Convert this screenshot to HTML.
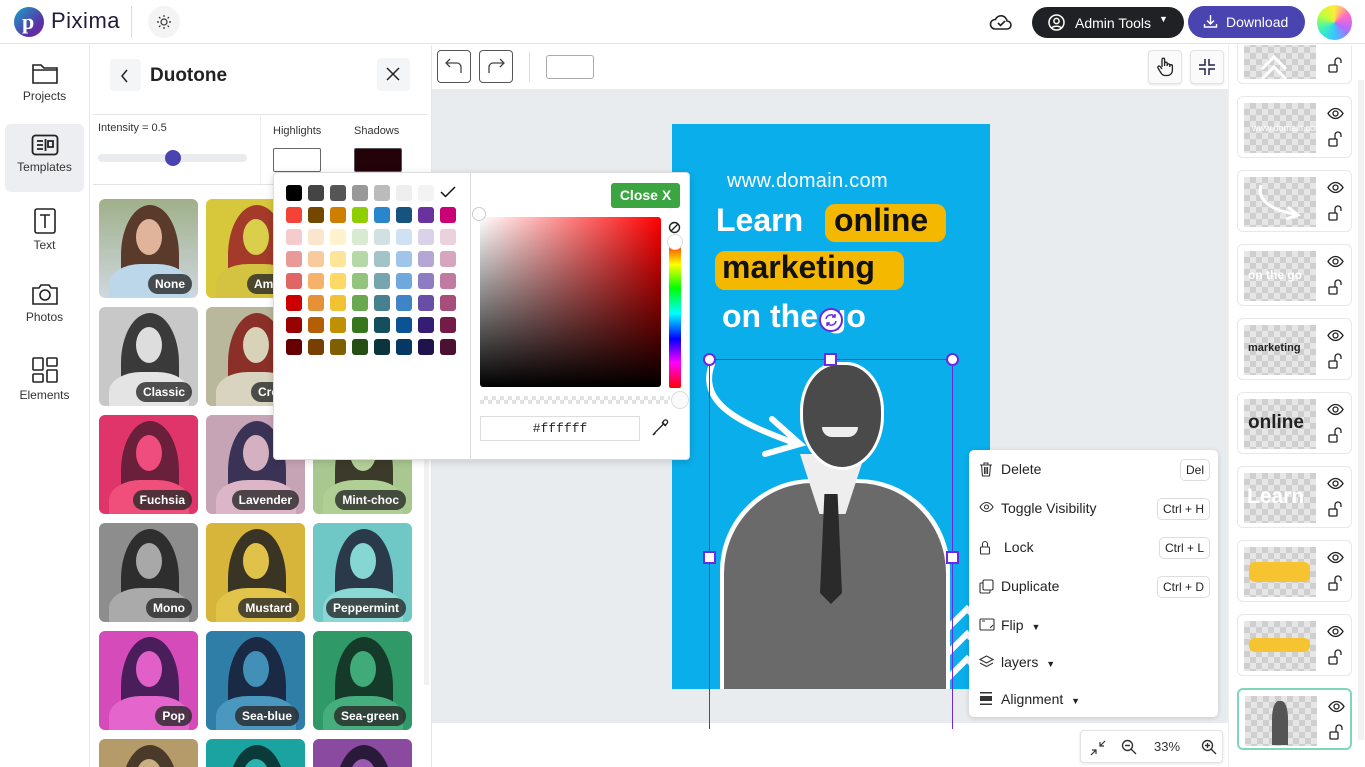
<!DOCTYPE html>
<html><head><meta charset="utf-8">
<style>
*{box-sizing:border-box;margin:0;padding:0}
html,body{width:1365px;height:767px;overflow:hidden}
body{font-family:"Liberation Sans",sans-serif;background:#fff;color:#222}
#root{position:relative;width:1365px;height:767px;overflow:hidden}
.abs{position:absolute}
.top{left:0;top:0;width:1365px;height:44px;border-bottom:1px solid #e3e3e3;background:#fff;z-index:5}
.side{left:0;top:45px;width:90px;height:722px;border-right:1px solid #e6e6e6}
.nav{position:absolute;left:5px;width:79px;height:68px;text-align:center;font-size:12px;color:#333}
.nav svg{display:block;margin:10px auto 4px}
.panel{left:90px;top:45px;width:342px;height:722px;background:#fff;border-right:1px solid #e6e6e6;overflow:hidden}
.th{position:absolute;width:99px;height:99px;border-radius:6px;overflow:hidden}
.th .hair{position:absolute;left:22px;top:6px;width:58px;height:100px;border-radius:50% 50% 20% 20%}
.th .face{position:absolute;left:37px;top:20px;width:26px;height:36px;border-radius:50%}
.th .body{position:absolute;left:10px;top:65px;width:80px;height:50px;border-radius:40% 40% 0 0}
.th .lb{position:absolute;right:6px;bottom:4px;background:rgba(40,40,40,.8);color:#fff;font-weight:bold;font-size:12px;padding:3px 7px;border-radius:10px}
.sw{position:absolute;width:16px;height:16px;border-radius:3px}
.layer{position:absolute;left:8px;width:115px;height:62px;border:1px solid #e8e8e8;border-radius:6px;background:#fff}
.layer .ck{position:absolute;left:6px;top:6px;width:72px;height:50px;background-color:#e6e6e6;background-image:linear-gradient(45deg,#cfcfcf 25%,transparent 25%,transparent 75%,#cfcfcf 75%),linear-gradient(45deg,#cfcfcf 25%,transparent 25%,transparent 75%,#cfcfcf 75%);background-size:12px 12px;background-position:0 0,6px 6px}
.layer .ey{position:absolute;left:89px;top:10px}
.layer .lk{position:absolute;left:90px;top:34px}
.mi{position:absolute;left:0;width:249px;height:39px;font-size:14px;color:#222}
.mi span.t{position:absolute;left:32px;top:11px}
.mi svg{position:absolute;left:10px;top:12px}
.kb{position:absolute;right:8px;top:9px;border:1px solid #ddd;border-radius:5px;font-size:12px;padding:3px 5px;background:#fff}
</style></head><body><div id="root">

<!-- top bar -->
<div class="abs top">
  <div class="abs" style="left:14px;top:7px;width:30px;height:30px;border-radius:50%;background:linear-gradient(135deg,#1aa3c9,#5b2fa6 70%,#7a2b8f)"></div>
  <div class="abs" style="left:22px;top:9px;color:#fff;font-weight:bold;font-size:22px;font-family:'Liberation Serif',serif">p</div>
  <div class="abs" style="left:51px;top:8px;font-size:22px;color:#231a3a;letter-spacing:.5px">Pixima</div>
  <div class="abs" style="left:131px;top:6px;width:1px;height:32px;background:#ddd"></div>
  <div class="abs" style="left:148px;top:6px;width:32px;height:32px;border-radius:50%;background:#f4f4f5"></div>
  <svg class="abs" style="left:156px;top:14px" width="16" height="16" viewBox="0 0 16 16" fill="none" stroke="#333" stroke-width="1.2"><circle cx="8" cy="8" r="3"/><path d="M8 1v2M8 13v2M1 8h2M13 8h2M3 3l1.4 1.4M11.6 11.6 13 13M3 13l1.4-1.4M11.6 4.4 13 3"/></svg>
  <svg class="abs" style="left:989px;top:12px" width="24" height="20" viewBox="0 0 24 20" fill="none" stroke="#222" stroke-width="1.6"><path d="M6 17h12a4 4 0 0 0 0-8 6 6 0 0 0-11.5-1.5A4.5 4.5 0 0 0 6 17z"/><path d="M9 11l2.5 2.5L16 9"/></svg>
  <div class="abs" style="left:1032px;top:7px;width:152px;height:31px;border-radius:16px;background:#202124;color:#fff;font-size:14px">
    <svg class="abs" style="left:16px;top:7px" width="17" height="17" viewBox="0 0 17 17" fill="none" stroke="#fff" stroke-width="1.5"><circle cx="8.5" cy="8.5" r="7.5"/><circle cx="8.5" cy="7" r="2.6"/><path d="M3.8 14c1.5-2.3 7.9-2.3 9.4 0"/></svg>
    <span class="abs" style="left:43px;top:8px">Admin Tools</span>
    <span class="abs" style="left:127px;top:7px;font-size:9px">▼</span>
  </div>
  <div class="abs" style="left:1188px;top:6px;width:117px;height:32px;border-radius:16px;background:#4a44b0;color:#fff;font-size:14px">
    <svg class="abs" style="left:15px;top:8px" width="15" height="15" viewBox="0 0 15 15" fill="none" stroke="#fff" stroke-width="1.4"><path d="M7.5 1v9M4 6.5l3.5 3.5L11 6.5M1.5 10v3h12v-3"/></svg>
    <span class="abs" style="left:38px;top:8px">Download</span>
  </div>
  <div class="abs" style="left:1317px;top:5px;width:35px;height:35px;border-radius:50%;background:conic-gradient(#ffeb3b,#ff69c8,#b06bff,#38c6ff,#38f0c0,#bfff3a,#ffeb3b)"></div>
</div>

<!-- sidebar -->
<div class="abs side">
  <div class="nav" style="top:6px">
    <svg width="28" height="24" viewBox="0 0 28 24" fill="none" stroke="#222" stroke-width="1.6"><path d="M2 4h8l3 3h13v15H2z"/><path d="M2 9h24"/></svg>Projects</div>
  <div class="nav" style="top:79px;background:#eceef1;border-radius:6px">
    <svg width="28" height="22" viewBox="0 0 28 22" fill="none" stroke="#222" stroke-width="1.8"><rect x="1.5" y="1.5" width="25" height="19" rx="3"/><path d="M6 7h6M6 11h6M6 15h6M14.5 5v12M17 7h5v6h-5z"/></svg>Templates</div>
  <div class="nav" style="top:153px">
    <svg width="22" height="26" viewBox="0 0 22 26" fill="none" stroke="#222" stroke-width="1.6"><rect x="1" y="1" width="20" height="24" rx="2"/><path d="M6 7h10M11 7v13"/></svg>Text</div>
  <div class="nav" style="top:227px">
    <svg width="28" height="24" viewBox="0 0 28 24" fill="none" stroke="#222" stroke-width="1.6"><path d="M2 6h6l2-3h8l2 3h6v16H2z"/><circle cx="14" cy="13" r="5"/></svg>Photos</div>
  <div class="nav" style="top:301px">
    <svg width="28" height="28" viewBox="0 0 28 28" fill="none" stroke="#222" stroke-width="1.6"><rect x="2" y="2" width="10" height="12" rx="1"/><rect x="16" y="2" width="10" height="8" rx="1"/><rect x="2" y="18" width="10" height="8" rx="1"/><rect x="16" y="14" width="10" height="12" rx="1"/></svg>Elements</div>
</div>

<!-- panel -->
<div class="abs panel">
  <div class="abs" style="left:20px;top:14px;width:31px;height:32px;background:#f4f5f6;border-radius:4px"></div>
  <svg class="abs" style="left:30px;top:24px" width="10" height="14" viewBox="0 0 10 14" fill="none" stroke="#222" stroke-width="1.5"><path d="M7 1 2 7l5 6"/></svg>
  <div class="abs" style="left:60px;top:20px;font-size:19px;font-weight:bold;color:#222">Duotone</div>
  <div class="abs" style="left:287px;top:13px;width:33px;height:33px;background:#f4f5f6;border-radius:4px"></div>
  <svg class="abs" style="left:296px;top:22px" width="14" height="14" viewBox="0 0 14 14" stroke="#222" stroke-width="1.5"><path d="M1 1l12 12M13 1 1 13"/></svg>
  <div class="abs" style="left:3px;top:69px;width:334px;height:1px;background:#e3e3e3"></div>
  <div class="abs" style="left:8px;top:77px;font-size:11px;color:#333">Intensity = 0.5</div>
  <div class="abs" style="left:8px;top:109px;width:149px;height:8px;border-radius:4px;background:#e9ebee"></div>
  <div class="abs" style="left:75px;top:105px;width:16px;height:16px;border-radius:50%;background:#4a44b0"></div>
  <div class="abs" style="left:170px;top:71px;width:1px;height:70px;background:#eee"></div>
  <div class="abs" style="left:183px;top:80px;font-size:11px;color:#333">Highlights</div>
  <div class="abs" style="left:264px;top:80px;font-size:11px;color:#333">Shadows</div>
  <div class="abs" style="left:183px;top:103px;width:48px;height:24px;border:1px solid #666;border-radius:2px;background:#fff"></div>
  <div class="abs" style="left:264px;top:103px;width:48px;height:24px;border:1px solid #555;border-radius:2px;background:#230309"></div>
  <div class="abs" style="left:3px;top:139px;width:334px;height:1px;background:#e3e3e3"></div>
  <div class="abs" style="left:334px;top:150px;width:5px;height:490px;background:#f1f1f1"></div>

  <!-- thumbnails (relative to panel: x-90, y-45) -->
  <div class="th" style="left:9px;top:154px;background:linear-gradient(#9fb08a,#cfd8e0)"><div class="hair" style="background:#5a3a2a"></div><div class="face" style="background:#e0b49a"></div><div class="body" style="background:#bcd6ea"></div><span class="lb">None</span></div>
  <div class="th" style="left:116px;top:154px;background:#d6c83a"><div class="hair" style="background:#a33a2a"></div><div class="face" style="background:#d9cf4a"></div><div class="body" style="background:#d4c340"></div><span class="lb">Amber</span></div>
  <div class="th" style="left:223px;top:154px;background:#ccc"></div>
  <div class="th" style="left:9px;top:262px;background:#c8c8c8"><div class="hair" style="background:#3a3a3a"></div><div class="face" style="background:#ddd"></div><div class="body" style="background:#e4e4e4"></div><span class="lb">Classic</span></div>
  <div class="th" style="left:116px;top:262px;background:#b9b79c"><div class="hair" style="background:#8a3028"></div><div class="face" style="background:#d8d2b8"></div><div class="body" style="background:#d8d4c0"></div><span class="lb">Cross</span></div>
  <div class="th" style="left:223px;top:262px;background:#ccc"></div>
  <div class="th" style="left:9px;top:370px;background:#e0356a"><div class="hair" style="background:#6a1f3a"></div><div class="face" style="background:#ef4d7d"></div><div class="body" style="background:#f04f7c"></div><span class="lb">Fuchsia</span></div>
  <div class="th" style="left:116px;top:370px;background:#c7a3b6"><div class="hair" style="background:#3b3356"></div><div class="face" style="background:#d4b0c0"></div><div class="body" style="background:#dcb6c6"></div><span class="lb">Lavender</span></div>
  <div class="th" style="left:223px;top:370px;background:#a8c890"><div class="hair" style="background:#3c3a2a"></div><div class="face" style="background:#b5d29a"></div><div class="body" style="background:#b0cf95"></div><span class="lb">Mint-choc</span></div>
  <div class="th" style="left:9px;top:478px;background:#8d8d8d"><div class="hair" style="background:#2e2e2e"></div><div class="face" style="background:#a8a8a8"></div><div class="body" style="background:#aaa"></div><span class="lb">Mono</span></div>
  <div class="th" style="left:116px;top:478px;background:#d7b43a"><div class="hair" style="background:#3a3424"></div><div class="face" style="background:#e0c24a"></div><div class="body" style="background:#e2c44a"></div><span class="lb">Mustard</span></div>
  <div class="th" style="left:223px;top:478px;background:#6fc7c6"><div class="hair" style="background:#2a3a4a"></div><div class="face" style="background:#86d6d4"></div><div class="body" style="background:#8ad8d6"></div><span class="lb">Peppermint</span></div>
  <div class="th" style="left:9px;top:586px;background:#d44bb9"><div class="hair" style="background:#4a1e5a"></div><div class="face" style="background:#e060c8"></div><div class="body" style="background:#e466cc"></div><span class="lb">Pop</span></div>
  <div class="th" style="left:116px;top:586px;background:#2f7ea8"><div class="hair" style="background:#1a2a44"></div><div class="face" style="background:#4290b8"></div><div class="body" style="background:#4a98c0"></div><span class="lb">Sea-blue</span></div>
  <div class="th" style="left:223px;top:586px;background:#2f9a68"><div class="hair" style="background:#153a2a"></div><div class="face" style="background:#40aa78"></div><div class="body" style="background:#45ae7c"></div><span class="lb">Sea-green</span></div>
  <div class="th" style="left:9px;top:694px;background:#b59a6a"><div class="hair" style="background:#4a3a2a"></div><div class="face" style="background:#c8ae80"></div></div>
  <div class="th" style="left:116px;top:694px;background:#1aa3a0"><div class="hair" style="background:#0a3a3a"></div><div class="face" style="background:#2ab4b0"></div></div>
  <div class="th" style="left:223px;top:694px;background:#8a4aa0"><div class="hair" style="background:#2a1a3a"></div><div class="face" style="background:#9a5ab0"></div></div>
</div>

<!-- canvas area -->
<div class="abs" style="left:432px;top:45px;width:796px;height:44px;background:#fff"></div>
<div class="abs" style="left:437px;top:50px;width:34px;height:33px;border:1px solid #555;border-radius:4px"></div>
<svg class="abs" style="left:445px;top:58px" width="18" height="16" viewBox="0 0 18 16" fill="none" stroke="#444" stroke-width="1.3"><path d="M5 1 1 5l4 4M1 5h11a4 4 0 0 1 4 4v6"/></svg>
<div class="abs" style="left:479px;top:50px;width:34px;height:33px;border:1px solid #555;border-radius:4px"></div>
<svg class="abs" style="left:487px;top:58px" width="18" height="16" viewBox="0 0 18 16" fill="none" stroke="#444" stroke-width="1.3"><path d="M13 1l4 4-4 4M17 5H6a4 4 0 0 0-4 4v6"/></svg>
<div class="abs" style="left:529px;top:52px;width:1px;height:30px;background:#ddd"></div>
<div class="abs" style="left:546px;top:55px;width:48px;height:24px;border:1px solid #aaa;border-radius:3px"></div>
<div class="abs" style="left:1148px;top:50px;width:34px;height:34px;border:1px solid #e3e3e3;border-radius:4px;background:#fafafa;box-shadow:0 1px 2px rgba(0,0,0,.1)"></div>
<svg class="abs" style="left:1156px;top:57px" width="18" height="20" viewBox="0 0 18 20" fill="none" stroke="#222" stroke-width="1.3"><path d="M6 10V2.5a1.3 1.3 0 0 1 2.6 0V9M8.6 8V6.5a1.3 1.3 0 0 1 2.6 0V9M11.2 8.2a1.3 1.3 0 0 1 2.6 0V10M13.8 9a1.3 1.3 0 0 1 2.6 0V13c0 3-2 5.5-5 5.5H9c-2 0-3-1-4-2.5L2 11a1.3 1.3 0 0 1 2-1.6L6 12"/></svg>
<div class="abs" style="left:1190px;top:50px;width:34px;height:34px;border:1px solid #e3e3e3;border-radius:4px;background:#fafafa;box-shadow:0 1px 2px rgba(0,0,0,.1)"></div>
<svg class="abs" style="left:1198px;top:58px" width="18" height="18" viewBox="0 0 18 18" fill="none" stroke="#224" stroke-width="1.5"><path d="M7 1v6H1M11 1v6h6M7 17v-6H1M11 17v-6h6"/></svg>
<div class="abs" style="left:432px;top:89px;width:796px;height:634px;background:#e9ecef"></div>
<div class="abs" style="left:432px;top:723px;width:796px;height:44px;background:#fff"></div>

<!-- artboard -->
<div class="abs" style="left:672px;top:124px;width:318px;height:565px;background:#0aaeeb;overflow:hidden">
  <div class="abs" style="left:55px;top:46px;color:#fff;font-size:20px;letter-spacing:.3px">www.domain.com</div>
  <div class="abs" style="left:44px;top:78px;color:#fff;font-size:32px;font-weight:bold">Learn</div>
  <div class="abs" style="left:153px;top:80px;width:121px;height:38px;border-radius:10px;background:#f5b800"></div>
  <div class="abs" style="left:162px;top:78px;color:#111;font-size:32px;font-weight:bold">online</div>
  <div class="abs" style="left:43px;top:127px;width:189px;height:39px;border-radius:10px;background:#f5b800"></div>
  <div class="abs" style="left:50px;top:125px;color:#111;font-size:32px;font-weight:bold">marketing</div>
  <div class="abs" style="left:50px;top:174px;color:#fff;font-size:32px;font-weight:bold">on the go</div>
  <svg class="abs" style="left:30px;top:235px" width="110" height="105" viewBox="0 0 110 105" fill="none" stroke="#fff" stroke-width="6" stroke-linecap="round"><path d="M10 5C-5 45 40 65 95 85M70 60l28 25-35 10"/></svg>
  <svg class="abs" style="left:260px;top:480px" width="60" height="90" viewBox="0 0 60 90" fill="none" stroke="#fff" stroke-width="6"><path d="M5 35 35 5 60 30M5 60l30-30 25 25M5 85l30-30 25 25"/></svg>
  <!-- man -->
  <div class="abs" style="left:48px;top:355px;width:230px;height:230px;border-radius:40% 40% 0 0;background:#fff"></div>
  <div class="abs" style="left:52px;top:359px;width:222px;height:226px;border-radius:40% 40% 0 0;background:#6a6a6a"></div>
  <div class="abs" style="left:128px;top:330px;width:65px;height:60px;background:#eee;clip-path:polygon(0 0,100% 0,70% 100%,30% 100%)"></div>
  <div class="abs" style="left:148px;top:370px;width:22px;height:110px;background:#2a2a2a;clip-path:polygon(20% 0,80% 0,100% 90%,50% 100%,0 90%)"></div>
  <div class="abs" style="left:128px;top:238px;width:84px;height:108px;border-radius:45% 45% 50% 50%;background:#fff"></div>
  <div class="abs" style="left:131px;top:241px;width:78px;height:102px;border-radius:45% 45% 50% 50%;background:#4a4a4a"></div>
  <div class="abs" style="left:150px;top:303px;width:36px;height:10px;border-radius:0 0 18px 18px;background:#eee"></div>
</div>
<!-- selection -->
<div class="abs" style="left:709px;top:359px;width:244px;height:370px;border:1.5px solid #6b2ae0;border-bottom:none"></div>
<div class="abs" style="left:703px;top:353px;width:13px;height:13px;border:2px solid #6b2ae0;border-radius:50%;background:#fff"></div>
<div class="abs" style="left:946px;top:353px;width:13px;height:13px;border:2px solid #6b2ae0;border-radius:50%;background:#fff"></div>
<div class="abs" style="left:824px;top:353px;width:13px;height:13px;border:2px solid #6b2ae0;background:#fff"></div>
<div class="abs" style="left:703px;top:551px;width:13px;height:13px;border:2px solid #6b2ae0;background:#fff"></div>
<div class="abs" style="left:946px;top:551px;width:13px;height:13px;border:2px solid #6b2ae0;background:#fff"></div>
<div class="abs" style="left:819px;top:308px;width:24px;height:24px;border:2px solid #6b2ae0;border-radius:50%;background:#fff"></div>
<svg class="abs" style="left:823px;top:312px" width="16" height="16" viewBox="0 0 16 16" fill="none" stroke="#6b2ae0" stroke-width="1.5"><path d="M3 7a5 5 0 0 1 9-2M13 9a5 5 0 0 1-9 2M12 2v3H9M4 14v-3h3"/></svg>

<!-- color picker -->
<div class="abs" style="left:273px;top:172px;width:417px;height:288px;background:#fff;border:1px solid #ddd;border-radius:4px;box-shadow:0 2px 8px rgba(0,0,0,.15)">
  <div class="abs" style="left:196px;top:0;width:1px;height:288px;background:#ddd"></div>
  <svg class="abs" style="left:166px;top:12px" width="16" height="14" viewBox="0 0 16 14" fill="none" stroke="#111" stroke-width="1.5"><path d="M1 7l4.5 4.5L15 2"/></svg>
  <div class="abs" style="left:337px;top:10px;width:69px;height:25px;background:#3aa541;border-radius:3px;color:#fff;font-weight:bold;font-size:14px;text-align:center;line-height:25px">Close X</div>
  <div class="abs" style="left:206px;top:44px;width:181px;height:170px;border-radius:3px;background:linear-gradient(to top,#000,transparent),linear-gradient(to right,#fff,#f00)"></div>
  <div class="abs" style="left:198px;top:34px;width:14px;height:14px;border-radius:50%;border:1px solid #ccc;background:#fff"></div>
  <div class="abs" style="left:395px;top:66px;width:12px;height:149px;border-radius:2px;background:linear-gradient(#f00,#ff0 17%,#0f0 33%,#0ff 50%,#00f 67%,#f0f 83%,#f00)"></div>
  <div class="abs" style="left:393px;top:61px;width:16px;height:16px;border-radius:50%;border:1px solid #ddd;background:#fff"></div>
  <svg class="abs" style="left:394px;top:48px" width="13" height="13" viewBox="0 0 13 13" fill="none" stroke="#222" stroke-width="1.4"><circle cx="6.5" cy="6.5" r="5"/><path d="M3 10l7-7"/></svg>
  <div class="abs" style="left:206px;top:223px;width:190px;height:8px;background-image:linear-gradient(45deg,#ddd 25%,transparent 25%,transparent 75%,#ddd 75%),linear-gradient(45deg,#ddd 25%,transparent 25%,transparent 75%,#ddd 75%);background-size:8px 8px;background-position:0 0,4px 4px;opacity:.8"></div>
  <div class="abs" style="left:397px;top:218px;width:18px;height:18px;border-radius:50%;border:1px solid #ddd;background:#fafafa"></div>
  <div class="abs" style="left:206px;top:243px;width:160px;height:25px;border:1px solid #ddd;font-family:'Liberation Mono',monospace;font-size:13px;text-align:center;line-height:24px">#ffffff</div>
  <svg class="abs" style="left:377px;top:246px" width="18" height="18" viewBox="0 0 18 18" fill="none" stroke="#222" stroke-width="1.3"><path d="M11 3l4 4M13 1.5a2 2 0 0 1 3 3L14 6.5 11.5 4zM12 5.5 4 13.5 2 16l2.5-2"/></svg>
</div>

<!-- context menu -->
<div class="abs" style="left:969px;top:450px;width:249px;height:267px;background:#fff;border-radius:5px;box-shadow:0 1px 6px rgba(0,0,0,.15)">
  <div class="mi" style="top:0"><svg width="14" height="15" viewBox="0 0 14 15" fill="none" stroke="#333" stroke-width="1.1"><path d="M1 3h12M5 3V1h4v2M2.5 3l1 11h7l1-11M5.5 5v7M7 5v7M8.5 5v7"/></svg><span class="t">Delete</span><span class="kb">Del</span></div>
  <div class="mi" style="top:39px"><svg width="15" height="12" viewBox="0 0 15 12" fill="none" stroke="#333" stroke-width="1.1"><path d="M1 6s2.5-4.5 6.5-4.5S14 6 14 6s-2.5 4.5-6.5 4.5S1 6 1 6z"/><circle cx="7.5" cy="6" r="2"/></svg><span class="t">Toggle Visibility</span><span class="kb">Ctrl + H</span></div>
  <div class="mi" style="top:78px"><svg width="12" height="15" viewBox="0 0 12 15" fill="none" stroke="#333" stroke-width="1.1"><rect x="1.5" y="7" width="9" height="7" rx="1"/><path d="M3.5 7V4a2.5 2.5 0 0 1 5 0v3"/></svg><span class="t" style="left:35px">Lock</span><span class="kb">Ctrl + L</span></div>
  <div class="mi" style="top:117px"><svg width="15" height="15" viewBox="0 0 15 15" fill="none" stroke="#333" stroke-width="1.1"><rect x="4" y="1" width="10" height="10" rx="1.5"/><path d="M4 4H2a1 1 0 0 0-1 1v8a1 1 0 0 0 1 1h8a1 1 0 0 0 1-1v-2"/></svg><span class="t">Duplicate</span><span class="kb">Ctrl + D</span></div>
  <div class="mi" style="top:156px"><svg width="16" height="13" viewBox="0 0 16 13" fill="none" stroke="#333" stroke-width="1.1"><rect x="1" y="1" width="14" height="11" rx="1"/><path d="M11 10l3-3M3 3h3"/></svg><span class="t">Flip <span style="font-size:9px;margin-left:4px">▼</span></span></div>
  <div class="mi" style="top:193px"><svg width="15" height="13" viewBox="0 0 15 13" fill="none" stroke="#333" stroke-width="1.1"><path d="M7.5 1 14 4.5 7.5 8 1 4.5zM1 8l6.5 3.5L14 8"/></svg><span class="t">layers <span style="font-size:9px;margin-left:4px">▼</span></span></div>
  <div class="mi" style="top:230px"><svg width="14" height="13" viewBox="0 0 14 13"><rect x="1" y="0" width="12" height="1.5" fill="#333"/><rect x="1" y="4" width="12" height="5" fill="#333"/><rect x="1" y="11.5" width="12" height="1.5" fill="#333"/></svg><span class="t">Alignment <span style="font-size:9px;margin-left:4px">▼</span></span></div>
</div>

<!-- zoom control -->
<div class="abs" style="left:1080px;top:730px;width:143px;height:33px;background:#fff;border:1px solid #e3e3e3;border-radius:4px;box-shadow:0 1px 3px rgba(0,0,0,.1);font-size:13px;color:#333">
  <svg class="abs" style="left:9px;top:9px" width="16" height="16" viewBox="0 0 16 16" fill="none" stroke="#333" stroke-width="1.2"><path d="M1 15l5-5M2 10h4v4M15 1l-5 5M10 2v4h4"/></svg>
  <svg class="abs" style="left:40px;top:8px" width="16" height="16" viewBox="0 0 16 16" fill="none" stroke="#333" stroke-width="1.4"><circle cx="6.5" cy="6.5" r="5"/><path d="M10 10l5 5M4 6.5h5"/></svg>
  <span class="abs" style="left:73px;top:8px">33%</span>
  <svg class="abs" style="left:120px;top:8px" width="16" height="16" viewBox="0 0 16 16" fill="none" stroke="#333" stroke-width="1.4"><circle cx="6.5" cy="6.5" r="5"/><path d="M10 10l5 5M4 6.5h5M6.5 4v5"/></svg>
</div>

<!-- layers panel -->
<div class="abs" style="left:1228px;top:45px;width:137px;height:722px;background:#fff;border-left:1px solid #eee;overflow:hidden">
<div class="abs" style="left:129px;top:35px;width:6px;height:660px;background:#f1f1f1"></div>
<div class="layer" style="top:-23px"><div class="ck"></div><svg class="abs" style="left:16px;top:18px" width="40" height="40" viewBox="0 0 40 40" fill="none" stroke="#fff" stroke-width="3"><path d="M8 28 20 16l12 12M8 38l12-12 12 12"/></svg><svg class="lk" width="14" height="16" viewBox="0 0 14 16" fill="none" stroke="#222" stroke-width="1.3"><rect x="1" y="8" width="8" height="7" rx="1"/><path d="M7 8V4a3 3 0 0 1 6 0v2"/></svg></div>
<div class="layer" style="top:51px"><div class="ck"></div><span class="abs" style="left:14px;top:26px;font-size:9px;color:#fff">www.domain.com</span><svg class="ey" width="17" height="13" viewBox="0 0 17 13" fill="none" stroke="#222" stroke-width="1.3"><path d="M1 6.5S4 1.5 8.5 1.5 16 6.5 16 6.5s-3 5-7.5 5S1 6.5 1 6.5z"/><circle cx="8.5" cy="6.5" r="2.5"/></svg><svg class="lk" width="14" height="16" viewBox="0 0 14 16" fill="none" stroke="#222" stroke-width="1.3"><rect x="1" y="8" width="8" height="7" rx="1"/><path d="M7 8V4a3 3 0 0 1 6 0v2"/></svg></div>
<div class="layer" style="top:125px"><div class="ck"></div><svg class="abs" style="left:18px;top:12px" width="50" height="40" viewBox="0 0 50 40" fill="none" stroke="#fff" stroke-width="3"><path d="M5 2C0 20 20 28 42 32M32 24l10 8-12 4"/></svg><svg class="ey" width="17" height="13" viewBox="0 0 17 13" fill="none" stroke="#222" stroke-width="1.3"><path d="M1 6.5S4 1.5 8.5 1.5 16 6.5 16 6.5s-3 5-7.5 5S1 6.5 1 6.5z"/><circle cx="8.5" cy="6.5" r="2.5"/></svg><svg class="lk" width="14" height="16" viewBox="0 0 14 16" fill="none" stroke="#222" stroke-width="1.3"><rect x="1" y="8" width="8" height="7" rx="1"/><path d="M7 8V4a3 3 0 0 1 6 0v2"/></svg></div>
<div class="layer" style="top:199px"><div class="ck"></div><span class="abs" style="left:10px;top:23px;font-size:12px;font-weight:bold;color:#fff">on the go</span><svg class="ey" width="17" height="13" viewBox="0 0 17 13" fill="none" stroke="#222" stroke-width="1.3"><path d="M1 6.5S4 1.5 8.5 1.5 16 6.5 16 6.5s-3 5-7.5 5S1 6.5 1 6.5z"/><circle cx="8.5" cy="6.5" r="2.5"/></svg><svg class="lk" width="14" height="16" viewBox="0 0 14 16" fill="none" stroke="#222" stroke-width="1.3"><rect x="1" y="8" width="8" height="7" rx="1"/><path d="M7 8V4a3 3 0 0 1 6 0v2"/></svg></div>
<div class="layer" style="top:273px"><div class="ck"></div><span class="abs" style="left:10px;top:23px;font-size:11px;font-weight:bold;color:#222">marketing</span><svg class="ey" width="17" height="13" viewBox="0 0 17 13" fill="none" stroke="#222" stroke-width="1.3"><path d="M1 6.5S4 1.5 8.5 1.5 16 6.5 16 6.5s-3 5-7.5 5S1 6.5 1 6.5z"/><circle cx="8.5" cy="6.5" r="2.5"/></svg><svg class="lk" width="14" height="16" viewBox="0 0 14 16" fill="none" stroke="#222" stroke-width="1.3"><rect x="1" y="8" width="8" height="7" rx="1"/><path d="M7 8V4a3 3 0 0 1 6 0v2"/></svg></div>
<div class="layer" style="top:347px"><div class="ck"></div><span class="abs" style="left:10px;top:19px;font-size:19px;font-weight:bold;color:#222">online</span><svg class="ey" width="17" height="13" viewBox="0 0 17 13" fill="none" stroke="#222" stroke-width="1.3"><path d="M1 6.5S4 1.5 8.5 1.5 16 6.5 16 6.5s-3 5-7.5 5S1 6.5 1 6.5z"/><circle cx="8.5" cy="6.5" r="2.5"/></svg><svg class="lk" width="14" height="16" viewBox="0 0 14 16" fill="none" stroke="#222" stroke-width="1.3"><rect x="1" y="8" width="8" height="7" rx="1"/><path d="M7 8V4a3 3 0 0 1 6 0v2"/></svg></div>
<div class="layer" style="top:421px"><div class="ck"></div><span class="abs" style="left:9px;top:18px;font-size:21px;font-weight:bold;color:#fff">Learn</span><svg class="ey" width="17" height="13" viewBox="0 0 17 13" fill="none" stroke="#222" stroke-width="1.3"><path d="M1 6.5S4 1.5 8.5 1.5 16 6.5 16 6.5s-3 5-7.5 5S1 6.5 1 6.5z"/><circle cx="8.5" cy="6.5" r="2.5"/></svg><svg class="lk" width="14" height="16" viewBox="0 0 14 16" fill="none" stroke="#222" stroke-width="1.3"><rect x="1" y="8" width="8" height="7" rx="1"/><path d="M7 8V4a3 3 0 0 1 6 0v2"/></svg></div>
<div class="layer" style="top:495px"><div class="ck"></div><div class="abs" style="left:11px;top:21px;width:61px;height:20px;border-radius:6px;background:#f7c431"></div><svg class="ey" width="17" height="13" viewBox="0 0 17 13" fill="none" stroke="#222" stroke-width="1.3"><path d="M1 6.5S4 1.5 8.5 1.5 16 6.5 16 6.5s-3 5-7.5 5S1 6.5 1 6.5z"/><circle cx="8.5" cy="6.5" r="2.5"/></svg><svg class="lk" width="14" height="16" viewBox="0 0 14 16" fill="none" stroke="#222" stroke-width="1.3"><rect x="1" y="8" width="8" height="7" rx="1"/><path d="M7 8V4a3 3 0 0 1 6 0v2"/></svg></div>
<div class="layer" style="top:569px"><div class="ck"></div><div class="abs" style="left:11px;top:23px;width:61px;height:14px;border-radius:6px;background:#f7c431"></div><svg class="ey" width="17" height="13" viewBox="0 0 17 13" fill="none" stroke="#222" stroke-width="1.3"><path d="M1 6.5S4 1.5 8.5 1.5 16 6.5 16 6.5s-3 5-7.5 5S1 6.5 1 6.5z"/><circle cx="8.5" cy="6.5" r="2.5"/></svg><svg class="lk" width="14" height="16" viewBox="0 0 14 16" fill="none" stroke="#222" stroke-width="1.3"><rect x="1" y="8" width="8" height="7" rx="1"/><path d="M7 8V4a3 3 0 0 1 6 0v2"/></svg></div>
<div class="layer" style="top:643px;border:2px solid #7ed8b8"><div class="ck"></div><div class="abs" style="left:33px;top:11px;width:16px;height:44px;border-radius:40% 40% 0 0;background:#555"></div><svg class="ey" width="17" height="13" viewBox="0 0 17 13" fill="none" stroke="#222" stroke-width="1.3"><path d="M1 6.5S4 1.5 8.5 1.5 16 6.5 16 6.5s-3 5-7.5 5S1 6.5 1 6.5z"/><circle cx="8.5" cy="6.5" r="2.5"/></svg><svg class="lk" width="14" height="16" viewBox="0 0 14 16" fill="none" stroke="#222" stroke-width="1.3"><rect x="1" y="8" width="8" height="7" rx="1"/><path d="M7 8V4a3 3 0 0 1 6 0v2"/></svg></div>
</div>

<!-- swatches -->
<div class="sw" style="left:286px;top:185px;background:#000"></div><div class="sw" style="left:308px;top:185px;background:#444"></div><div class="sw" style="left:330px;top:185px;background:#555"></div><div class="sw" style="left:352px;top:185px;background:#999"></div><div class="sw" style="left:374px;top:185px;background:#bbb"></div><div class="sw" style="left:396px;top:185px;background:#eee"></div><div class="sw" style="left:418px;top:185px;background:#f3f3f3"></div>
<div class="sw" style="left:286px;top:207px;background:#f44336"></div><div class="sw" style="left:308px;top:207px;background:#744700"></div><div class="sw" style="left:330px;top:207px;background:#ce7e00"></div><div class="sw" style="left:352px;top:207px;background:#8fce00"></div><div class="sw" style="left:374px;top:207px;background:#2986cc"></div><div class="sw" style="left:396px;top:207px;background:#16537e"></div><div class="sw" style="left:418px;top:207px;background:#6a329f"></div><div class="sw" style="left:440px;top:207px;background:#c90076"></div>
<div class="sw" style="left:286px;top:229px;background:#f4cccc"></div><div class="sw" style="left:308px;top:229px;background:#fce5cd"></div><div class="sw" style="left:330px;top:229px;background:#fff2cc"></div><div class="sw" style="left:352px;top:229px;background:#d9ead3"></div><div class="sw" style="left:374px;top:229px;background:#d0e0e3"></div><div class="sw" style="left:396px;top:229px;background:#cfe2f3"></div><div class="sw" style="left:418px;top:229px;background:#d9d2e9"></div><div class="sw" style="left:440px;top:229px;background:#ead1dc"></div>
<div class="sw" style="left:286px;top:251px;background:#ea9999"></div><div class="sw" style="left:308px;top:251px;background:#f9cb9c"></div><div class="sw" style="left:330px;top:251px;background:#ffe599"></div><div class="sw" style="left:352px;top:251px;background:#b6d7a8"></div><div class="sw" style="left:374px;top:251px;background:#a2c4c9"></div><div class="sw" style="left:396px;top:251px;background:#9fc5e8"></div><div class="sw" style="left:418px;top:251px;background:#b4a7d6"></div><div class="sw" style="left:440px;top:251px;background:#d5a6bd"></div>
<div class="sw" style="left:286px;top:273px;background:#e06666"></div><div class="sw" style="left:308px;top:273px;background:#f6b26b"></div><div class="sw" style="left:330px;top:273px;background:#ffd966"></div><div class="sw" style="left:352px;top:273px;background:#93c47d"></div><div class="sw" style="left:374px;top:273px;background:#76a5af"></div><div class="sw" style="left:396px;top:273px;background:#6fa8dc"></div><div class="sw" style="left:418px;top:273px;background:#8e7cc3"></div><div class="sw" style="left:440px;top:273px;background:#c27ba0"></div>
<div class="sw" style="left:286px;top:295px;background:#cc0000"></div><div class="sw" style="left:308px;top:295px;background:#e69138"></div><div class="sw" style="left:330px;top:295px;background:#f1c232"></div><div class="sw" style="left:352px;top:295px;background:#6aa84f"></div><div class="sw" style="left:374px;top:295px;background:#45818e"></div><div class="sw" style="left:396px;top:295px;background:#3d85c6"></div><div class="sw" style="left:418px;top:295px;background:#674ea7"></div><div class="sw" style="left:440px;top:295px;background:#a64d79"></div>
<div class="sw" style="left:286px;top:317px;background:#990000"></div><div class="sw" style="left:308px;top:317px;background:#b45f06"></div><div class="sw" style="left:330px;top:317px;background:#bf9000"></div><div class="sw" style="left:352px;top:317px;background:#38761d"></div><div class="sw" style="left:374px;top:317px;background:#134f5c"></div><div class="sw" style="left:396px;top:317px;background:#0b5394"></div><div class="sw" style="left:418px;top:317px;background:#351c75"></div><div class="sw" style="left:440px;top:317px;background:#741b47"></div>
<div class="sw" style="left:286px;top:339px;background:#660000"></div><div class="sw" style="left:308px;top:339px;background:#783f04"></div><div class="sw" style="left:330px;top:339px;background:#7f6000"></div><div class="sw" style="left:352px;top:339px;background:#274e13"></div><div class="sw" style="left:374px;top:339px;background:#0c343d"></div><div class="sw" style="left:396px;top:339px;background:#073763"></div><div class="sw" style="left:418px;top:339px;background:#20124d"></div><div class="sw" style="left:440px;top:339px;background:#4c1130"></div>

</div></body></html>
